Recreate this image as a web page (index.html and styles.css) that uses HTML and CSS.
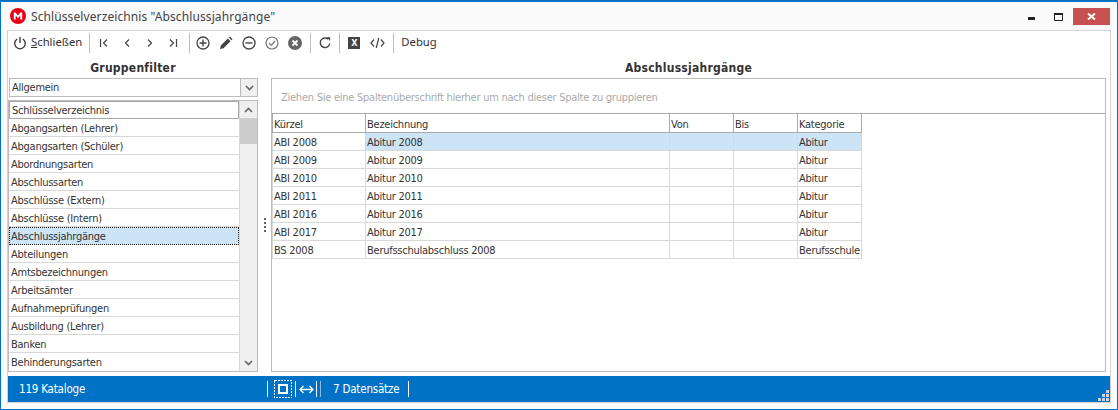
FILE: index.html
```html
<!DOCTYPE html>
<html lang="de">
<head>
  <meta charset="utf-8">
  <title>Schlüsselverzeichnis</title>
  <link rel="stylesheet" href="styles.css">
</head>
<body>
<div class="window">
  <!-- Titelleiste -->
  <div class="titlebar">
    <svg class="logo" width="16" height="16" viewBox="0 0 16 16"><circle cx="8" cy="8" r="8" fill="#e60012"/><path d="M3.800 11.500V4.600h1.800L8 7.600l2.400-3h1.800v6.900h-1.900V7.600L8 10.200 5.700 7.600v3.900z" fill="#fff"/></svg>
    <span class="title">Schlüsselverzeichnis "Abschlussjahrgänge"</span>
    <div class="winbtns">
      <svg class="winmin" width="7" height="3" viewBox="0 0 7 3"><rect width="7" height="3" fill="#222"/></svg>
      <svg class="winmax" width="9" height="8" viewBox="0 0 9 8"><path d="M.5.500h8v7h-8z" fill="none" stroke="#222"/><rect width="9" height="2" fill="#222"/></svg>
      <div class="closebtn"><svg width="9" height="7" viewBox="0 0 9 7"><path d="M1 .500l7 6M8 .500l-7 6" stroke="#fff" stroke-width="2" fill="none"/></svg></div>
    </div>
  </div>

  <div class="frame">
    <!-- Werkzeugleiste -->
    <div class="toolbar">
      <div class="tbgroup power">
        <svg width="14" height="14" viewBox="0 0 14 14"><path d="M4.200 3a5.300 5.300 0 1 0 5.600 0M7 1v6" fill="none" stroke="#333" stroke-width="1.300"/></svg>
        <span class="tbtext"><u>S</u>chließen</span>
      </div>
      <i class="sep"></i>
      <div class="tbgroup nav">
        <svg width="10" height="10" viewBox="0 0 10 10"><path d="M1.500 1v8M8 1.500L4.500 5 8 8.500" fill="none" stroke="#444" stroke-width="1.200"/></svg>
        <svg width="10" height="10" viewBox="0 0 10 10"><path d="M7 1.500L3.500 5 7 8.500" fill="none" stroke="#444" stroke-width="1.200"/></svg>
        <svg width="10" height="10" viewBox="0 0 10 10"><path d="M3 1.500L6.500 5 3 8.500" fill="none" stroke="#444" stroke-width="1.200"/></svg>
        <svg width="10" height="10" viewBox="0 0 10 10"><path d="M8.500 1v8M2 1.500L5.500 5 2 8.500" fill="none" stroke="#444" stroke-width="1.200"/></svg>
      </div>
      <i class="sep"></i>
      <div class="tbgroup act">
        <svg width="14" height="14" viewBox="0 0 14 14"><circle cx="7" cy="7" r="6" fill="none" stroke="#444" stroke-width="1.300"/><path d="M7 3.500v7M3.500 7h7" stroke="#444" stroke-width="1.400"/></svg>
        <svg width="14" height="14" viewBox="0 0 14 14"><path d="M1 13l.8-3.500 7-7 2.700 2.700-7 7zM9.800 1.500l1-1 2.700 2.700-1 1z" fill="#444"/></svg>
        <svg width="14" height="14" viewBox="0 0 14 14"><circle cx="7" cy="7" r="6" fill="none" stroke="#444" stroke-width="1.300"/><path d="M3.500 7h7" stroke="#444" stroke-width="1.400"/></svg>
        <svg width="14" height="14" viewBox="0 0 14 14"><circle cx="7" cy="7" r="6" fill="none" stroke="#777" stroke-width="1.200"/><path d="M4 7l2.200 2.300L10.300 5" fill="none" stroke="#777" stroke-width="1.200"/></svg>
        <svg width="14" height="14" viewBox="0 0 14 14"><circle cx="7" cy="7" r="7" fill="#666"/><path d="M4.500 4.500l5 5M9.500 4.500l-5 5" stroke="#fff" stroke-width="1.800"/></svg>
      </div>
      <i class="sep"></i>
      <div class="tbgroup">
        <svg width="14" height="14" viewBox="0 0 14 14"><path d="M11.800 7.500A4.800 4.800 0 1 1 10.300 3.200" fill="none" stroke="#444" stroke-width="1.400"/><path d="M8.800 1l3.400.200V5z" fill="#444"/></svg>
      </div>
      <i class="sep"></i>
      <div class="tbgroup export">
        <div class="xls">X</div>
        <svg width="15" height="12" viewBox="0 0 15 12"><path d="M4 2.500L1 6l3 3.500M11 2.500L14 6l-3 3.500M8.800 1L6.200 11" fill="none" stroke="#444" stroke-width="1.200"/></svg>
      </div>
      <i class="sep"></i>
      <span class="tbtext">Debug</span>
    </div>

    <div class="content">
      <!-- linke Seite -->
      <div class="left">
        <div class="heading">Gruppenfilter</div>
        <div class="combo">
          <span class="combotext">Allgemein</span>
          <div class="combobtn"><svg width="9" height="6" viewBox="0 0 9 6"><path d="M1 1l3.500 3.500L8 1" fill="none" stroke="#666" stroke-width="1.600"/></svg></div>
        </div>
        <div class="listbox">
          <div class="items">
            <div class="item focus">Schlüsselverzeichnis</div>
            <div class="item">Abgangsarten (Lehrer)</div>
            <div class="item">Abgangsarten (Schüler)</div>
            <div class="item">Abordnungsarten</div>
            <div class="item">Abschlussarten</div>
            <div class="item">Abschlüsse (Extern)</div>
            <div class="item">Abschlüsse (Intern)</div>
            <div class="item selected">Abschlussjahrgänge</div>
            <div class="item">Abteilungen</div>
            <div class="item">Amtsbezeichnungen</div>
            <div class="item">Arbeitsämter</div>
            <div class="item">Aufnahmeprüfungen</div>
            <div class="item">Ausbildung (Lehrer)</div>
            <div class="item">Banken</div>
            <div class="item last">Behinderungsarten</div>
          </div>
          <div class="scrollbar">
            <div class="scrollbtn"><svg width="9" height="6" viewBox="0 0 9 6"><path d="M1 5l3.500-3.500L8 5" fill="none" stroke="#666" stroke-width="1.600"/></svg></div>
            <div class="thumb"></div>
            <div class="track"></div>
            <div class="scrollbtn"><svg width="9" height="6" viewBox="0 0 9 6"><path d="M1 1l3.500 3.500L8 1" fill="none" stroke="#666" stroke-width="1.600"/></svg></div>
          </div>
        </div>
      </div>

      <div class="splitter"><div class="grip"><i></i><i></i><i></i><i></i></div></div>

      <!-- rechte Seite -->
      <div class="right">
        <div class="heading">Abschlussjahrgänge</div>
        <div class="gridbox">
          <div class="groupband">Ziehen Sie eine Spaltenüberschrift hierher um nach dieser Spalte zu gruppieren</div>
          <table class="grid">
            <colgroup><col class="c1"><col class="c2"><col class="c3"><col class="c3"><col class="c3"></colgroup>
            <tr><th>Kürzel</th><th>Bezeichnung</th><th>Von</th><th>Bis</th><th>Kategorie</th></tr>
            <tr class="current"><td>ABI 2008</td><td>Abitur 2008</td><td></td><td></td><td>Abitur</td></tr>
            <tr><td>ABI 2009</td><td>Abitur 2009</td><td></td><td></td><td>Abitur</td></tr>
            <tr><td>ABI 2010</td><td>Abitur 2010</td><td></td><td></td><td>Abitur</td></tr>
            <tr><td>ABI 2011</td><td>Abitur 2011</td><td></td><td></td><td>Abitur</td></tr>
            <tr><td>ABI 2016</td><td>Abitur 2016</td><td></td><td></td><td>Abitur</td></tr>
            <tr><td>ABI 2017</td><td>Abitur 2017</td><td></td><td></td><td>Abitur</td></tr>
            <tr><td>BS 2008</td><td>Berufsschulabschluss 2008</td><td></td><td></td><td>Berufsschule</td></tr>
          </table>
        </div>
      </div>
    </div>

    <!-- Statusleiste -->
    <div class="statusbar">
      <span class="count">119 Kataloge</span>
      <i class="stline"></i>
      <svg class="stfit" width="18" height="18" viewBox="0 0 18 18"><rect x=".5" y=".5" width="17" height="17" fill="none" stroke="#fff" stroke-dasharray="2 1" shape-rendering="crispEdges"/><rect x="5" y="5" width="8" height="8" fill="none" stroke="#fff" stroke-width="2"/></svg>
      <i class="stline"></i>
      <svg class="starrow" width="15" height="9" viewBox="0 0 15 9"><path d="M1 4.500h13M4.500 1L1 4.500 4.500 8M10.500 1L14 4.500 10.500 8" fill="none" stroke="#fff" stroke-width="1.300"/></svg>
      <i class="stline"></i>
      <i class="stline dim"></i>
      <span class="records">7 Datensätze</span>
      <i class="stline"></i>
      <svg class="sizegrip" width="11" height="11" viewBox="0 0 11 11" fill="#c4d4e4"><rect x="8" width="3" height="3"/><rect x="4" y="4" width="3" height="3"/><rect x="8" y="4" width="3" height="3"/><rect y="8" width="3" height="3"/><rect x="4" y="8" width="3" height="3"/><rect x="8" y="8" width="3" height="3"/></svg>
    </div>
  </div>
</div>
</body>
</html>
```

FILE: styles.css
```css
/* Grundlayout */
html, body {
  margin: 0;
  height: 100%;
}

body {
  background-color: #fff;
  font-family: "DejaVu Sans Condensed", "DejaVu Sans", sans-serif;
  font-stretch: condensed;
  font-size: 11px;
  letter-spacing: -.25px;
  color: #333;
  overflow: hidden;
}

.window {
  box-sizing: border-box;
  height: 410px;
  border: 1px solid #0072c6;
  border-top-width: 2px;
  background-color: #fafafa;
  padding: 0 6px 6px 6px;
  display: flex;
  flex-direction: column;
}

/* Titelleiste */
.titlebar {
  height: 28px;
  display: flex;
  align-items: center;
  flex-shrink: 0;
  margin-left: 3px;
}

.logo {
  margin-right: 5px;
}

.title {
  font-family: "Noto Sans", sans-serif;
  font-stretch: normal;
  font-size: 12px;
  letter-spacing: .1px;
  color: #444;
}

.winbtns {
  margin-left: auto;
  display: flex;
  align-items: center;
  margin-right: 1px;
}

.winmin {
  margin: 5px 19px 0 0;
}

.winmax {
  margin: 1px 10px 0 0;
}

.closebtn {
  width: 37px;
  height: 17px;
  background-color: #c75050;
  display: flex;
  align-items: center;
  justify-content: center;
}

/* Rahmen um den Inhalt */
.frame {
  flex: 1;
  min-height: 0;
  border: 1px solid #d4d4d4;
  background-color: #fff;
  display: flex;
  flex-direction: column;
}

/* Werkzeugleiste */
.toolbar {
  height: 23px;
  display: flex;
  align-items: center;
  flex-shrink: 0;
  padding-left: 5px;
}

.tbgroup {
  display: flex;
  align-items: center;
}

.tbtext {
  font-family: "Noto Sans", sans-serif;
  font-stretch: normal;
  font-size: 11.300px;
  letter-spacing: 0;
  color: #333;
  margin-bottom: 2px;
}

.power {
  gap: 4px;
}

.nav {
  gap: 13px;
  margin: 0 4px 0 2px;
}

.act {
  gap: 9px;
  margin: 0 1px 0 -1px;
}

.export {
  gap: 10px;
  margin: 0 1px;
}

.sep {
  width: 1px;
  height: 20px;
  background-color: #bbb;
  margin: 0 7px;
}

.xls {
  width: 12px;
  height: 12px;
  background-color: #444;
  color: #fff;
  font-size: 9px;
  font-weight: bold;
  letter-spacing: 0;
  line-height: 12px;
  text-align: center;
}

/* Inhalt */
.content {
  flex: 1;
  min-height: 0;
  display: flex;
  padding: 0 4px 4px 0;
}

.left {
  width: 250px;
  display: flex;
  flex-direction: column;
}

.right {
  flex: 1;
  min-width: 0;
  display: flex;
  flex-direction: column;
}

.heading {
  height: 24px;
  line-height: 28px;
  text-align: center;
  font-weight: bold;
  font-size: 12px;
  letter-spacing: .25px;
  color: #333;
  flex-shrink: 0;
}

.combo {
  height: 19px;
  margin: 0 0 3px 1px;
  border: 1px solid #bbb;
  display: flex;
  flex-shrink: 0;
  box-sizing: border-box;
  background-color: #fff;
}

.combotext {
  flex: 1;
  line-height: 18px;
  padding-left: 2px;
}

.combobtn {
  width: 16px;
  background-color: #f0f0f0;
  border-left: 1px solid #bbb;
  display: flex;
  align-items: center;
  justify-content: center;
}

.listbox {
  flex: 1;
  min-height: 0;
  display: flex;
  border: 1px solid #bbb;
  box-sizing: border-box;
}

.items {
  flex: 1;
  min-width: 0;
}

.item {
  box-sizing: border-box;
  height: 18px;
  line-height: 19px;
  padding-left: 2px;
  border-bottom: 1px solid #d8d8d8;
  white-space: nowrap;
  overflow: hidden;
}

.item.last {
  border-bottom: 0;
}

.item.focus {
  border: 1px solid #a8a8a8;
  padding-left: 2px;
  line-height: 18px;
}

.item.selected {
  background-color: #cde4f7;
  outline: 1px dotted #222;
  outline-offset: -1px;
}

.scrollbar {
  width: 17px;
  background-color: #f0f0f0;
  border-left: 1px solid #d8d8d8;
  display: flex;
  flex-direction: column;
  flex-shrink: 0;
}

.scrollbtn {
  height: 17px;
  display: flex;
  align-items: center;
  justify-content: center;
  flex-shrink: 0;
}

.thumb {
  height: 26px;
  background-color: #cdcdcd;
  flex-shrink: 0;
}

.track {
  flex: 1;
}

/* Teiler */
.splitter {
  width: 13px;
  margin-top: 24px;
  display: flex;
  align-items: center;
  justify-content: center;
  flex-shrink: 0;
}

.grip {
  display: flex;
  flex-direction: column;
  gap: 2px;
}

.grip i {
  display: block;
  width: 2px;
  height: 2px;
  background-color: #666;
}

/* Tabelle */
.gridbox {
  flex: 1;
  min-height: 0;
  border: 1px solid #bbb;
  box-sizing: border-box;
}

.groupband {
  height: 35px;
  line-height: 37px;
  box-sizing: border-box;
  padding-left: 9px;
  color: #aaa;
  border-bottom: 1px solid #aaa;
  background-color: #fff;
  white-space: nowrap;
}

.grid {
  table-layout: fixed;
  border-collapse: collapse;
  width: 590px;
  font-size: 11px;
}

.c1 { width: 93px; }
.c2 { width: 304px; }
.c3 { width: 64px; }

.grid tr {
  height: 18px;
}

.grid th {
  font-weight: normal;
  text-align: left;
  padding: 3px 0 0 1px;
  border: 1px solid #aaa;
  border-top: 0;
  white-space: nowrap;
  overflow: hidden;
}

.grid td {
  padding: 2px 0 0 1px;
  border: 1px solid #d8d8d8;
  white-space: nowrap;
  overflow: hidden;
}

.grid tr.current td:not(:first-child) {
  background-color: #cde4f7;
}

/* Statusleiste */
.statusbar {
  height: 26px;
  flex-shrink: 0;
  background-color: #0072c6;
  color: #fff;
  font-size: 11.500px;
  letter-spacing: -.2px;
  display: flex;
  align-items: center;
  padding-left: 11px;
  position: relative;
}

.count {
  width: 248px;
}

.stline {
  width: 1px;
  height: 16px;
  background-color: #fff;
}

.stline.dim {
  background-color: #8fb9dc;
  margin-left: 3px;
}

.stfit {
  margin: 0 3px 0 6px;
}

.starrow {
  margin: 0 2px 0 3px;
}

.records {
  margin: 0 9px 0 12px;
}

.sizegrip {
  position: absolute;
  right: 1px;
  bottom: 1px;
}
```
